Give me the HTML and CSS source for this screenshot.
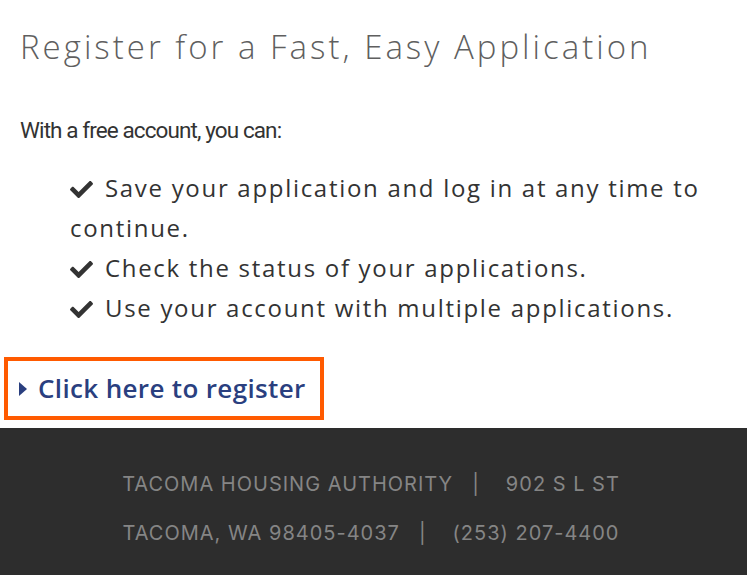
FILE: index.html
```html
<!DOCTYPE html>
<html>
<head>
<meta charset="utf-8">
<link rel="stylesheet" href="styles.css">
</head>
<body>
<main class="content">
  <h1 class="title">Register for a Fast, Easy Application</h1>
  <p class="intro">With a free account, you can:</p>
  <ul class="benefits">
    <li><svg class="check" viewBox="0 68 512 376"><path d="M173.9 439.4L7.5 273c-10-10-10-26.2 0-36.2l36.2-36.2c10-10 26.2-10 36.2 0L192 312.7 432.1 72.6c10-10 26.2-10 36.2 0l36.2 36.2c10 10 10 26.2 0 36.2L210.1 439.4c-10 10-26.2 10-36.2 0z"/></svg> Save your application and log in at any time to continue.</li>
    <li><svg class="check" viewBox="0 68 512 376"><path d="M173.9 439.4L7.5 273c-10-10-10-26.2 0-36.2l36.2-36.2c10-10 26.2-10 36.2 0L192 312.7 432.1 72.6c10-10 26.2-10 36.2 0l36.2 36.2c10 10 10 26.2 0 36.2L210.1 439.4c-10 10-26.2 10-36.2 0z"/></svg> Check the status of your applications.</li>
    <li><svg class="check" viewBox="0 68 512 376"><path d="M173.9 439.4L7.5 273c-10-10-10-26.2 0-36.2l36.2-36.2c10-10 26.2-10 36.2 0L192 312.7 432.1 72.6c10-10 26.2-10 36.2 0l36.2 36.2c10 10 10 26.2 0 36.2L210.1 439.4c-10 10-26.2 10-36.2 0z"/></svg> Use your account with multiple applications.</li>
  </ul>
  <div class="cta-wrap">
    <a class="cta" href="#"><svg class="caret" viewBox="0 0 8 14"><path d="M0 0 L8 7 L0 14 Z"/></svg>Click here to register</a>
  </div>
</main>
<footer class="footer">
  <p class="footer-line">TACOMA HOUSING AUTHORITY<span class="sep">|</span>902 S L ST</p>
  <p class="footer-line">TACOMA, WA 98405-4037<span class="sep">|</span>(253) 207-4400</p>
</footer>
</body>
</html>
```
FILE: styles.css
```css
html, body {
  margin: 0;
  padding: 0;
  background: #fff;
}
body {
  font-family: "Open Sans", "Noto Sans", sans-serif;
}
.content {
  padding: 24px 20px 8px 20px;
  max-width: 707px;
}
.title {
  margin: 0;
  font-family: "Open Sans", "Noto Sans", sans-serif;
  font-weight: 300;
  font-size: 33px;
  letter-spacing: 3px;
  line-height: 46px;
  color: #5f5f5f;
}
.intro {
  margin: 44px 0 0 0;
  font-family: "Roboto", "Liberation Sans", sans-serif;
  font-size: 22.5px;
  letter-spacing: -0.9px;
  line-height: 32px;
  color: #333;
}
.benefits {
  list-style: none;
  margin: 22px 0 0 0;
  padding: 0 0 0 50px;
  font-size: 24px;
  letter-spacing: 1.7px;
  line-height: 40px;
  color: #333;
}
.check {
  width: 23px;
  height: 17px;
  fill: #333;
  vertical-align: -1px;
  margin-right: 4px;
}
.cta-wrap {
  margin: 29px 0 0 -16px;
}
.cta {
  display: inline-flex;
  align-items: center;
  gap: 11px;
  padding: 10px 14px 10px 11px;
  border: 4px solid #ff5a00;
  font-size: 26px;
  font-weight: 600;
  letter-spacing: 0.35px;
  line-height: 35px;
  color: #2a3f7f;
  text-decoration: none;
}
.caret {
  width: 8px;
  height: 14px;
  fill: #2a3f7f;
}
.footer {
  background: #2d2d2d;
  padding: 32px 5px 22px 0;
  text-align: center;
}
.footer-line {
  margin: 0;
  font-family: "Inter", "Liberation Sans", sans-serif;
  font-size: 20px;
  letter-spacing: 1px;
  line-height: 49px;
  color: #858585;
}
.sep {
  margin: 0 26px 0 19px;
}
```
